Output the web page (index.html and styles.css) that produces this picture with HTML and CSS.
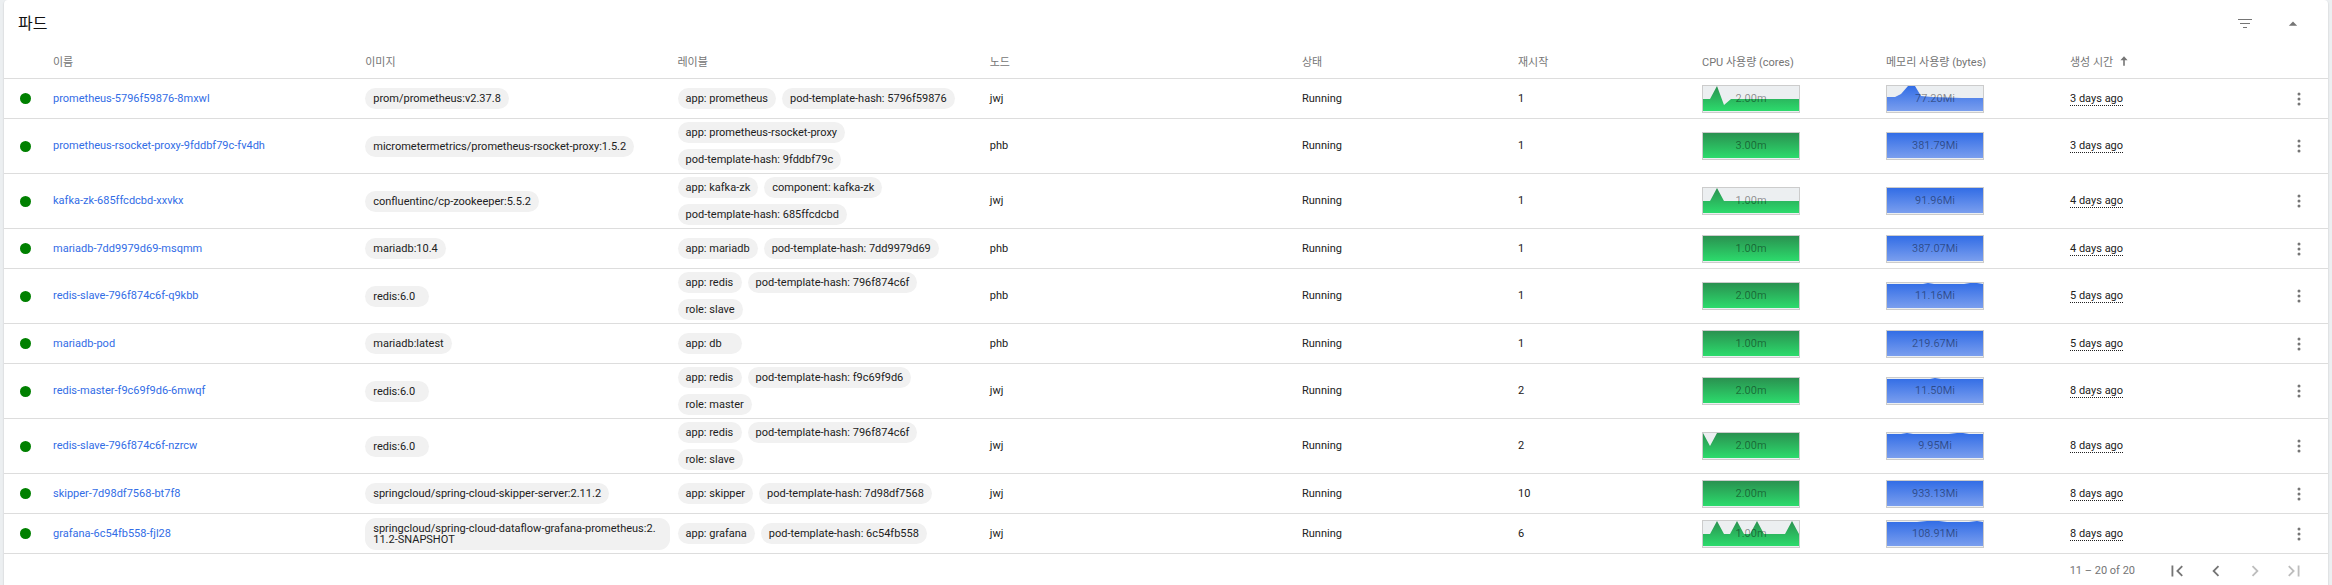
FILE: index.html
```html
<!DOCTYPE html>
<html lang="ko"><head><meta charset="utf-8"><title>파드</title><link rel="stylesheet" href="styles.css"></head>
<body><main class="card">
<header class="card-header"><h1 class="title">파드</h1>
<div class="actions">
<button class="icon-btn" aria-label="필터"><svg class="icon-filter" viewBox="0 0 16 10"><path d="M1 0h14v1H1zM3 4h10v1H3zM6 8h4v1H6z"/></svg></button>
<button class="icon-btn" aria-label="접기"><svg class="icon-caret" viewBox="0 0 24 24"><path d="M7 14l5-5 5 5z"/></svg></button>
</div></header>
<table class="pods">
<colgroup><col class="c-dot"><col class="c-wide"><col class="c-wide"><col class="c-wide"><col class="c-wide"><col class="c-status"><col class="c-mid"><col class="c-mid"><col class="c-mid"><col class="c-mid"><col class="c-menu"></colgroup>
<thead><tr><th></th><th>이름</th><th>이미지</th><th>레이블</th><th>노드</th><th>상태</th><th>재시작</th><th>CPU 사용량 (cores)</th><th>메모리 사용량 (bytes)</th><th>생성 시간 <svg class="sort" viewBox="0 0 10 12"><path d="M5 0L9.500 5H6v7H4V5H.5z"/></svg></th><th></th></tr></thead>
<tbody id="rows"></tbody></table>
<footer class="pager"><span class="range">11 – 20 of 20</span>
<button class="page-btn" aria-label="처음"><svg viewBox="0 0 24 24"><path d="M18.410 16.590L13.820 12l4.590-4.590L17 6l-6 6 6 6zM6 6h2v12H6z"/></svg></button>
<button class="page-btn" aria-label="이전"><svg viewBox="0 0 24 24"><path d="M15.410 7.410L14 6l-6 6 6 6 1.410-1.410L10.830 12z"/></svg></button>
<button class="page-btn" disabled aria-label="다음"><svg viewBox="0 0 24 24"><path d="M10 6L8.590 7.410 13.170 12l-4.580 4.590L10 18l6-6z"/></svg></button>
<button class="page-btn" disabled aria-label="마지막"><svg viewBox="0 0 24 24"><path d="M5.590 7.410L10.180 12l-4.590 4.590L7 18l6-6-6-6zM16 6h2v12h-2z"/></svg></button>
</footer></main>
<script src="pods.js"></script></body></html>
```
FILE: pods.js
```js
const flat = 'M0 0H96V25H0z';
const pods = [
 ['prometheus-5796f59876-8mxwl','prom/prometheus:v2.37.8',['app: prometheus','pod-template-hash: 5796f59876'],'jwj',1,'2.00m','M0 13H7L14 0L21 19L28 13H96V25H0z','77.20Mi','M0 11H8L14 8L21 0H28L34 10L45 11L75 12H96V25H0z','3 days ago'],
 ['prometheus-rsocket-proxy-9fddbf79c-fv4dh','micrometermetrics/prometheus-rsocket-proxy:1.5.2',['app: prometheus-rsocket-proxy','pod-template-hash: 9fddbf79c'],'phb',1,'3.00m',flat,'381.79Mi',flat,'3 days ago'],
 ['kafka-zk-685ffcdcbd-xxvkx','confluentinc/cp-zookeeper:5.5.2',['app: kafka-zk','component: kafka-zk','pod-template-hash: 685ffcdcbd'],'jwj',1,'1.00m','M0 13H7L14 0L21 13H96V25H0z','91.96Mi',flat,'4 days ago'],
 ['mariadb-7dd9979d69-msqmm','mariadb:10.4',['app: mariadb','pod-template-hash: 7dd9979d69'],'phb',1,'1.00m',flat,'387.07Mi',flat,'4 days ago'],
 ['redis-slave-796f874c6f-q9kbb','redis:6.0',['app: redis','pod-template-hash: 796f874c6f','role: slave'],'phb',1,'2.00m',flat,'11.16Mi','M0 1H36L41 0L47 1H77L83 0H90L96 1V25H0z','5 days ago'],
 ['mariadb-pod','mariadb:latest',['app: db'],'phb',1,'1.00m',flat,'219.67Mi',flat,'5 days ago'],
 ['redis-master-f9c69f9d6-6mwqf','redis:6.0',['app: redis','pod-template-hash: f9c69f9d6','role: master'],'jwj',2,'2.00m',flat,'11.50Mi','M0 1H43L48 0L54 1H96V25H0z','8 days ago'],
 ['redis-slave-796f874c6f-nzrcw','redis:6.0',['app: redis','pod-template-hash: 796f874c6f','role: slave'],'jwj',2,'2.00m','M0 0L7 13L14 0H96V25H0z','9.95Mi','M0 1H14L20 0L26 1H62L70 0H76L82 1H96V25H0z','8 days ago'],
 ['skipper-7d98df7568-bt7f8','springcloud/spring-cloud-skipper-server:2.11.2',['app: skipper','pod-template-hash: 7d98df7568'],'jwj',10,'2.00m',flat,'933.13Mi',flat,'8 days ago'],
 ['grafana-6c54fb558-fjl28','springcloud/spring-cloud-dataflow-grafana-prometheus:2.11.2-SNAPSHOT',['app: grafana','pod-template-hash: 6c54fb558'],'jwj',6,'1.00m','M0 13H7L14 0L21 13H27L34 0L41 13H47L54 0L61 13H82L89 0L96 13V25H0z','108.91Mi','M0 1H30L40 0H52L60 1H82L90 0L96 1V25H0z','8 days ago']
];
const chip = t => `<span class="chip">${t}</span>`;
const chart = (kind, text, d) => `<div class="chart ${kind}"><svg viewBox="0 0 96 25" preserveAspectRatio="none" aria-hidden="true"><defs><linearGradient id="g-${kind}" gradientUnits="userSpaceOnUse" x1="0" y1="0" x2="0" y2="25"><stop class="top" offset="0"/><stop class="bottom" offset="1"/></linearGradient></defs><path fill="url(#g-${kind})" d="${d}"/></svg><span class="value">${text}</span></div>`;
document.getElementById('rows').innerHTML = pods.map(([name, image, labels, node, restarts, cpu, cpuPath, mem, memPath, age]) =>
 `<tr><td class="dot-cell"><span class="dot"></span></td><td><a class="link" href="#">${name}</a></td><td><div class="chips">${chip(image)}</div></td><td><div class="chips">${labels.map(chip).join('')}</div></td><td>${node}</td><td>Running</td><td>${restarts}</td><td>${chart('cpu', cpu, cpuPath)}</td><td>${chart('mem', mem, memPath)}</td><td><span class="age">${age}</span></td><td class="menu-cell"><button class="menu-btn" aria-label="메뉴"><svg viewBox="0 0 4 14"><circle cx="2" cy="2" r="1.500"/><circle cx="2" cy="7" r="1.500"/><circle cx="2" cy="12" r="1.500"/></svg></button></td></tr>`).join('');
```
FILE: styles.css
```css
* { box-sizing: border-box; }
body { margin: 0; background: #eceff1; color: #212121; font: 11px/16px Roboto, "Noto Sans CJK KR", sans-serif; }
button { display: flex; align-items: center; justify-content: center; margin: 0; padding: 0; border: 0; background: none; color: #757575; }
svg { display: block; fill: currentColor; }
.card { min-height: 100vh; margin: 0 4px; background: #fff; border-radius: 4px 4px 0 0; box-shadow: 0 1px 2px #0003; }
.card-header { display: flex; align-items: center; justify-content: space-between; height: 48px; padding: 0 23px 0 14px; }
.title { margin: 0; color: #111; font-size: 16px; line-height: 24px; font-weight: 400; }
.actions { display: flex; gap: 24px; }
.icon-btn { width: 24px; height: 24px; }
.icon-filter { width: 16px; height: 10px; }
.icon-caret { width: 20px; height: 20px; }
.pods { width: 100%; table-layout: fixed; border-collapse: separate; border-spacing: 0; }
.c-dot { width: 49px; }
.c-status { width: 216px; }
.c-mid { width: 184px; }
.c-menu { width: 74px; }
th { height: 31px; padding: 0; text-align: left; font-weight: 400; color: #757575; border-bottom: 1px solid #ddd; }
td { height: 40px; padding: 0; vertical-align: middle; border-bottom: 1px solid #ddd; }
.sort { display: inline-block; width: 8px; height: 10px; margin-left: 4px; }
.dot-cell { padding-left: 16px; }
.dot { display: block; width: 11px; height: 11px; border-radius: 50%; background: #008000; }
.link { color: #326de6; text-decoration: none; }
.chips { display: flex; flex-wrap: wrap; gap: 6px; padding: 3px 8px 3px 0; }
.chip { min-width: 64px; padding: 5px 8px; border-radius: 11px; background: #f1f1f1; line-height: 11px; word-break: break-all; }
.chart { display: grid; width: 98px; height: 28px; border: 1px solid #ccc; background: #eceff1; }
.chart svg { grid-area: 1 / 1; width: 100%; height: 25px; }
.value { grid-area: 1 / 1; place-self: center; z-index: 1; color: #0000006b; }
.cpu .top { stop-color: #2a9150; }
.cpu .bottom { stop-color: #2cdb6c; }
.mem .top { stop-color: #326de6; }
.mem .bottom { stop-color: #7a9eee; }
.age { border-bottom: 1px dotted #212121; line-height: 12px; display: inline-block; }
.menu-cell { padding-left: 33px; }
.menu-btn { width: 24px; height: 24px; }
.menu-btn svg { width: 4px; height: 14px; }
.pager { display: flex; align-items: center; justify-content: flex-end; gap: 15px; height: 34px; padding-right: 22px; color: #757575; }
.range { margin-right: 15px; }
.page-btn { width: 24px; height: 24px; }
.page-btn svg { width: 22px; height: 22px; }
.page-btn:disabled { color: #bdbdbd; }
```
